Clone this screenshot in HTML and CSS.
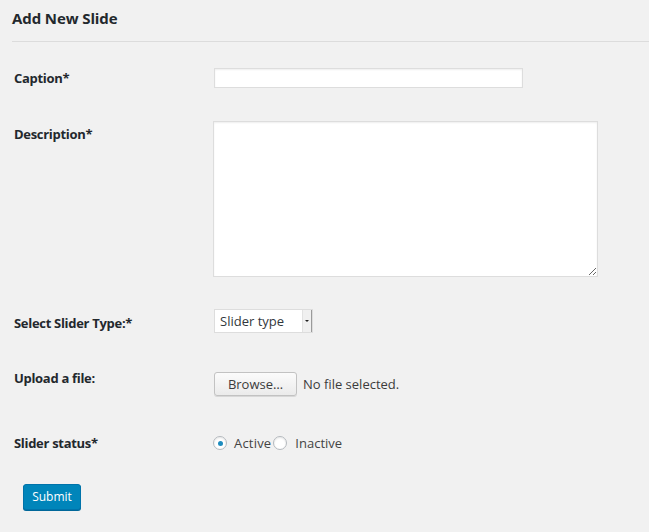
FILE: index.html
```html
<!DOCTYPE html>
<html>
<head>
<meta charset="utf-8">
<link rel="stylesheet" href="styles.css">
</head>
<body>
<div class="wrap">
  <h2 class="title">Add New Slide</h2>
  <form class="form">
    <div class="row row-caption">
      <label class="lbl">Caption*</label>
      <input class="text-input" type="text">
    </div>
    <div class="row row-desc">
      <label class="lbl lbl-top">Description*</label>
      <textarea class="textarea"></textarea>
    </div>
    <div class="row row-select">
      <label class="lbl">Select Slider Type:*</label>
      <div class="select">
        <span class="select-text">Slider type</span>
        <span class="select-arrow"><span class="tri"></span></span>
      </div>
    </div>
    <div class="row row-file">
      <label class="lbl">Upload a file:</label>
      <div class="file">
        <span class="browse">Browse…</span>
        <span class="file-note">No file selected.</span>
      </div>
    </div>
    <div class="row row-status">
      <label class="lbl">Slider status*</label>
      <div class="radios">
        <span class="radio checked"></span><span class="radio-label first">Active</span><span class="radio"></span><span class="radio-label second">Inactive</span>
      </div>
    </div>
    <div class="submit-row">
      <button type="button" class="btn-primary">Submit</button>
    </div>
  </form>
</div>
</body>
</html>
```
FILE: styles.css
```css
html, body {
  margin: 0;
  padding: 0;
  background: #f1f1f1;
}
body {
  font-family: "Open Sans", "Noto Sans", sans-serif;
  font-size: 13px;
  color: #444;
  height: 532px;
  overflow: hidden;
}
.wrap {
  padding-left: 12px;
}
.title {
  margin: 0;
  padding: 9px 0 14px 0;
  line-height: 18px;
  font-size: 15px;
  font-weight: 700;
  letter-spacing: -0.1px;
  color: #23282d;
  border-bottom: 1px solid #dcdcdc;
}
.form {
  padding-left: 2px;
  margin: 0;
}
.row {
  display: flex;
  align-items: center;
}
.lbl {
  width: 200px;
  flex: none;
  font-weight: 700;
  color: #23282d;
  line-height: 18px;
  letter-spacing: -0.3px;
}
.row-caption { padding-top: 26px; }
.row-desc { padding-top: 33px; align-items: flex-start; }
.row-desc .lbl { margin-top: 4px; }
.row-select { padding-top: 32px; }
.row-select .lbl { margin-top: 3px; }
.row-file { padding-top: 36px; align-items: flex-start; }
.row-file .file { margin-top: 3px; }
.row-status { padding-top: 37px; height: 20px; }
.text-input {
  box-sizing: border-box;
  width: 309px;
  height: 20px;
  margin: 0;
  border: 1px solid #dddddd;
  background: #fff;
  box-shadow: inset 0 1px 2px rgba(0,0,0,0.07);
  padding: 0 4px;
  font: inherit;
}
.textarea {
  box-sizing: border-box;
  width: 385px;
  height: 156px;
  margin: 0 0 0 -1px;
  border: 1px solid #dddddd;
  background: #fff;
  box-shadow: inset 0 1px 2px rgba(0,0,0,0.07);
  font: inherit;
  display: block;
}
.select {
  box-sizing: border-box;
  display: flex;
  width: 99px;
  height: 24px;
  border: 1px solid #dddddd;
  background: #fff;
}
.select-text {
  flex: 1;
  padding-left: 5px;
  line-height: 22px;
  color: #32373c;
}
.select-arrow {
  width: 8px;
  flex: none;
  background: #f0f0f0;
  border-left: 1px solid #e2e2e2;
  border-right: 1px solid #9a9a9a;
  display: flex;
  align-items: center;
  justify-content: center;
}
.tri {
  width: 0;
  height: 0;
  border-left: 2px solid transparent;
  border-right: 2px solid transparent;
  border-top: 2px solid #222;
}
.file {
  display: flex;
  align-items: center;
}
.browse {
  box-sizing: border-box;
  width: 83px;
  height: 24px;
  border: 1px solid #c2c2c2;
  border-radius: 3px;
  background: linear-gradient(#fbfbfb, #ebebeb);
  box-shadow: 0 1px 0 #d8d8d8;
  text-align: center;
  line-height: 22px;
  color: #3c3c3c;
}
.file-note {
  margin-left: 6px;
  color: #3c3c3c;
}
.radios {
  display: flex;
  align-items: center;
  margin-left: -1px;
}
.radio {
  box-sizing: border-box;
  width: 14px;
  height: 14px;
  border: 1px solid #b4b9be;
  border-radius: 50%;
  background: #fff;
  box-shadow: inset 0 1px 2px rgba(0,0,0,0.1);
  display: flex;
  align-items: center;
  justify-content: center;
}
.radio.checked::before {
  content: "";
  width: 5px;
  height: 5px;
  border-radius: 50%;
  background: #1e8cbe;
}
.radio-label {
  margin-left: 7px;
  color: #444;
}
.radio-label.first {
  letter-spacing: 0.2px;
  margin-right: 2px;
}
.radio-label.second {
  margin-left: 8px;
  letter-spacing: 0;
}
.submit-row {
  padding-top: 31px;
  padding-left: 9px;
}
.btn-primary {
  box-sizing: border-box;
  width: 58px;
  height: 26px;
  padding: 0;
  margin: 0;
  border: 1px solid #0073aa;
  border-radius: 3px;
  background: #0085ba;
  box-shadow: 0 1px 0 #006799;
  color: #fff;
  font-family: inherit;
  font-size: 12px;
  line-height: 24px;
}
```
